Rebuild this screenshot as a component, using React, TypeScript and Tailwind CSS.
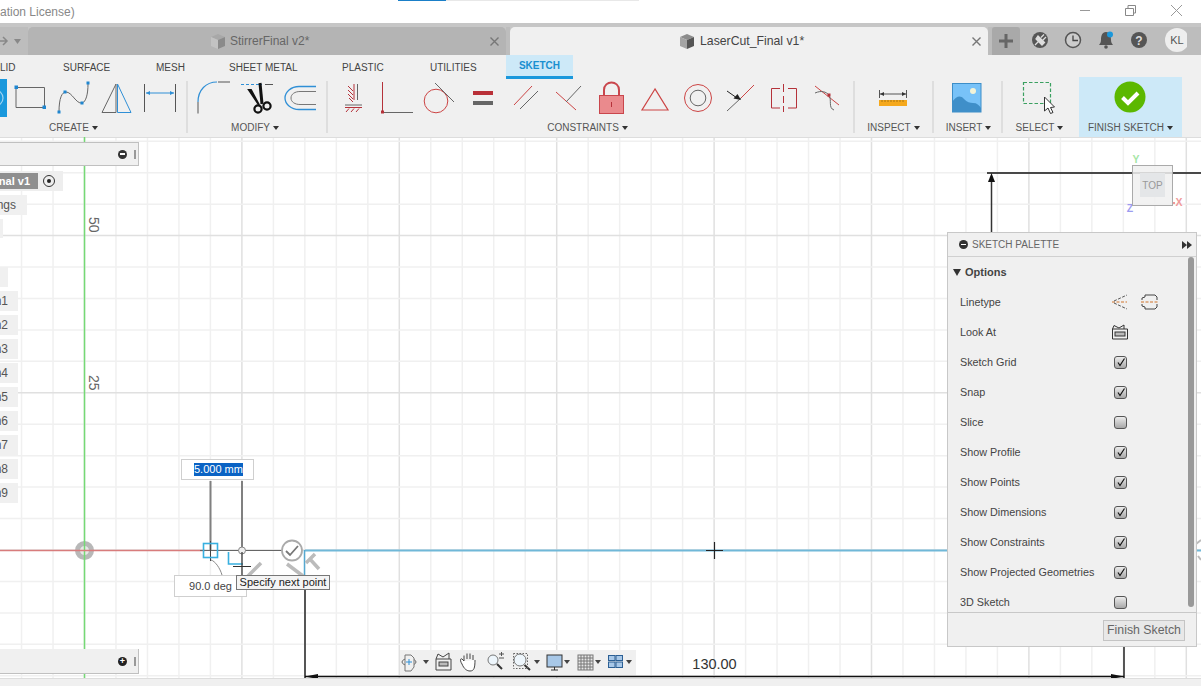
import React from "react";

const FONT = "font-['Liberation_Sans',Arial,sans-serif]";

const minorX = Array.from({length: 40}, (_, i) => 84.5 + (i - 3) * 31.48);
const minorY = Array.from({length: 19}, (_, i) => 550 - (i - 4) * 31.44);

type ToolProps = {x: number; w: number; width: string; label: string; labelClass?: string; children: React.ReactNode; sep?: boolean};

function Tool({x, w, width, label, labelClass = "", children, sep = true}: ToolProps) {
    return (
        <div className="flex h-full shrink-0">
            <div className={`flex flex-col items-center ${width}`}>
                <svg width={w} height={43} viewBox={`${x} 79 ${w} 43`} fill="none">
                    {children}
                </svg>
                <div className={`flex items-center gap-[3px] text-[10px] leading-[12px] text-[#555] ${labelClass}`}>
                    {label}
                    <span className="inline-block border-x-[3px] border-t-[4px] border-x-transparent border-t-[#333]" />
                </div>
            </div>
            {sep && <div className="mt-[2px] h-[52px] w-[2px] bg-[#dedede]" />}
        </div>
    );
}

function CreateIcons() {
    return (
        <>
            <rect x="-10" y="79" width="17" height="38" fill="#1a98dc" />
            <circle cx="-5" cy="98" r="8" stroke="#9fd4f2" strokeWidth="1.2" />
            <path d="M16 87.500H44.500V107.500H16Z" stroke="#666" strokeWidth="1" />
            <rect x="14.500" y="85.500" width="3.500" height="3.500" fill="#1f86d0" />
            <rect x="42.500" y="105.500" width="3.500" height="3.500" fill="#1f86d0" />
            <path d="M59 112C59 98 62 92 66 92C72 92 76 104 82 103C86 102 88 94 88 84" stroke="#666" strokeWidth="1" />
            <rect x="57.500" y="110.500" width="3" height="3" fill="#1f86d0" />
            <rect x="63.500" y="90.500" width="3" height="3" fill="#1f86d0" />
            <rect x="80.500" y="101.500" width="3" height="3" fill="#1f86d0" />
            <rect x="86.500" y="81.500" width="3" height="3" fill="#1f86d0" />
            <path d="M116 84V112.500H102Z" stroke="#666" strokeWidth="1" />
            <path d="M117.500 84L131 112.500H117.500Z" stroke="#2f8fd6" strokeWidth="1" />
            <path d="M144.500 84V112M175.500 84V112" stroke="#555" strokeWidth="1" />
            <path d="M146 93H174" stroke="#2f8fd6" strokeWidth="1" />
            <path d="M146 93L150 91V95ZM174 93L170 91V95Z" fill="#2f8fd6" />
        </>
    );
}

function ModifyIcons() {
    return (
        <>
            <path d="M198 102V113.500" stroke="#555" strokeWidth="1" />
            <path d="M198 102C198 90 206 82 217 82" stroke="#2f8fd6" strokeWidth="1.200" />
            <path d="M218 82H230" stroke="#555" strokeWidth="1" />
            <path d="M241 84.500H262" stroke="#2f8fd6" strokeWidth="1" strokeDasharray="3 2" />
            <path d="M265 84.500H273" stroke="#555" strokeWidth="1" />
            <path d="M249 90L259 105L251 90Z" fill="#111" stroke="#111" strokeWidth="2" />
            <path d="M260 83L262 104" stroke="#111" strokeWidth="3" />
            <circle cx="258" cy="109" r="3.600" stroke="#111" strokeWidth="2.200" />
            <circle cx="267" cy="106" r="3.600" stroke="#111" strokeWidth="2.200" />
            <path d="M316 86.500H299C291 86.500 285 92 285 98C285 104 291 109.500 299 109.500H316" stroke="#2f8fd6" strokeWidth="1.300" />
            <path d="M316 91.500H300C295 91.500 291 94 291 98C291 102 295 104.500 300 104.500H316" stroke="#777" strokeWidth="1" />
        </>
    );
}

function ConstraintIcons() {
    return (
        <>
            <path d="M354 84V100M348 86L353 91M348 90L353 95M348 94L353 99M349 98L353 102" stroke="#b5323a" strokeWidth="1" />
            <path d="M357.500 84V100" stroke="#666" strokeWidth="1" />
            <path d="M345 105H362" stroke="#666" strokeWidth="1" />
            <path d="M345 107.500H362" stroke="#b5323a" strokeWidth="1" />
            <path d="M346 112L349 108.500M351 112L354 108.500M356 112L359 108.500" stroke="#b5323a" strokeWidth="1" />
            <path d="M382.500 82V112" stroke="#b5323a" strokeWidth="1" />
            <path d="M383 112.500H413" stroke="#666" strokeWidth="1" />
            <rect x="381" y="110.500" width="3" height="3" fill="#b5323a" />
            <circle cx="436" cy="101" r="11.800" stroke="#c44" strokeWidth="1" />
            <path d="M435 83L454 102" stroke="#666" strokeWidth="1" />
            <rect x="473" y="91" width="20" height="4" fill="#b93038" />
            <rect x="473" y="101" width="20" height="4" fill="#666" />
            <path d="M514 105L532 86" stroke="#c44" strokeWidth="1" />
            <path d="M520 109L538 91" stroke="#666" strokeWidth="1" />
            <path d="M556 92L576 110" stroke="#c44" strokeWidth="1" />
            <path d="M566 102L581 86" stroke="#666" strokeWidth="1" />
            <path d="M604 95V90C604 80 619 80 619 90V95" stroke="#c9464c" strokeWidth="2" />
            <rect x="599.500" y="95.500" width="24" height="18" fill="#ea8a8d" stroke="#c9464c" />
            <path d="M611.500 102V107" stroke="#b5323a" strokeWidth="1" />
            <path d="M655 89L642 110H668Z" stroke="#c44" strokeWidth="1.200" />
            <circle cx="698" cy="98" r="13.500" stroke="#c44" strokeWidth="1" />
            <circle cx="698" cy="98" r="7.800" stroke="#666" strokeWidth="1" />
            <path d="M727 111L741 98" stroke="#666" strokeWidth="1" />
            <path d="M741 98L754 85" stroke="#c44" strokeWidth="1" />
            <path d="M727 91L737 98" stroke="#222" strokeWidth="1" />
            <path d="M741 100L733.500 98.500L737.500 94Z" fill="#222" />
            <path d="M780 88.500H771.500V108H780M788 88.500H796.500V108H788" stroke="#b5323a" strokeWidth="1" />
            <path d="M783.500 84V92M783.500 96V103M783.500 106V112" stroke="#b5323a" strokeWidth="1" />
            <path d="M815 86L839 105" stroke="#c44" strokeWidth="1" />
            <path d="M815 93C822 90 826 92 829 95C832 100 828 108 834 110" stroke="#666" strokeWidth="1" />
            <rect x="827.500" y="93.500" width="3" height="3" fill="#b5323a" />
        </>
    );
}

function BottomNav() {
    const caret = (x: number) => <path key={x} d={`M${x - 3} 660H${x + 3}L${x} 664Z`} fill="#444" />;
    return (
        <svg width="236" height="25" viewBox="400 650 236 25" fill="none">
            <ellipse cx="409" cy="662" rx="7" ry="3.500" stroke="#666" />
            <path d="M405 655H411L414 658V667L411 671H405Z" stroke="#777" fill="#f0f0f0" />
            <path d="M406 662H412M409 659V665" stroke="#2f8fd6" />
            {[426, 537, 567, 598, 629].map(caret)}
            <path d="M436 659H451V670H436ZM436 659L438 654L443 657L449 653V659" stroke="#444" />
            <rect x="439" y="662" width="9" height="4" stroke="#444" fill="#bbb" />
            <path d="M464 661V655.500M467 659V653.500M470 659V653.500M473 660V655M464 661L462 659C460 658 460 661 462 664C464 669 467 671 470 671C474 671 475 668 475 660" stroke="#444" fill="#fff" />
            <circle cx="493" cy="660" r="5" stroke="#777" fill="#eef6fc" />
            <path d="M497 664L502 669" stroke="#333" strokeWidth="2" />
            <path d="M499 654H504M501.500 652V656M499 658H504" stroke="#555" />
            <circle cx="520" cy="660" r="6" stroke="#777" fill="#eef6fc" />
            <path d="M524.500 665L530 670" stroke="#333" strokeWidth="2" />
            <rect x="513.500" y="653.500" width="14" height="15" stroke="#666" strokeDasharray="1.500 1.500" />
            <rect x="547" y="655" width="15" height="12" fill="#a8c8e8" stroke="#333" />
            <path d="M551 670H558M554.500 667V670" stroke="#333" />
            <g stroke="#777">
                <rect x="578" y="655" width="15" height="15" fill="#e8e8e8" />
                <path d="M581 655V670M584 655V670M587 655V670M590 655V670M578 658H593M578 661H593M578 664H593M578 667H593" />
            </g>
            <rect x="608.500" y="655.500" width="6.500" height="5" fill="#a8c8e8" stroke="#2b5f94" />
            <rect x="616" y="655.500" width="6.500" height="5" fill="#a8c8e8" stroke="#2b5f94" />
            <rect x="608.500" y="662" width="6.500" height="5.500" fill="#a8c8e8" stroke="#2b5f94" />
            <rect x="616" y="662" width="6.500" height="5.500" fill="#a8c8e8" stroke="#2b5f94" />
        </svg>
    );
}

function CanvasDrawing() {
    return (
        <svg className="absolute inset-0" width="1201" height="549" viewBox="0 137 1201 549" fill="none">
            {minorX.map((x, i) => (
                <line key={x} x1={x} x2={x} y1="137" y2="686" stroke={(i - 3) % 5 === 0 ? "#e0e0e0" : "#f0f0f0"} strokeWidth="1.500" />
            ))}
            {minorY.map((y, i) => (
                <line key={y} y1={y} y2={y} x1="0" x2="1201" stroke={(i - 4) % 5 === 0 ? "#e0e0e0" : "#f0f0f0"} strokeWidth="1.500" />
            ))}
            <path d="M0 137.500H1201" stroke="#dddddd" />

            <circle cx="84.500" cy="550.500" r="7" fill="#e8e8e8" stroke="#b8b8b8" strokeWidth="5" />
            <path d="M84.500 137V686" stroke="#75d975" strokeWidth="1.500" />
            <path d="M0 550.500H205" stroke="#d87c7c" strokeWidth="1.500" />
            <text transform="translate(88.500 217) rotate(90)" fontSize="14" fill="#666" fontFamily="Liberation Sans">50</text>
            <text transform="translate(88.500 375) rotate(90)" fontSize="14" fill="#666" fontFamily="Liberation Sans">25</text>

            <path d="M987 173H1201" stroke="#111" strokeWidth="1.500" />
            <path d="M991.500 181V235" stroke="#333" strokeWidth="1.500" />
            <path d="M991.500 173L988 182H995Z" fill="#111" />

            <path d="M305 550.500H1201" stroke="#70b8d8" strokeWidth="2" />
            <path d="M304.500 550V577" stroke="#55a8d0" strokeWidth="1.500" />
            <path d="M305 590V678M1124 640V678" stroke="#222" strokeWidth="1.500" />
            <path d="M305 676.500H1124" stroke="#111" strokeWidth="1.500" />
            <path d="M305 676.500L318 674V679ZM1124 676.500L1111 674V679Z" fill="#111" />
            <path d="M706 550.500H723M714.500 542V559" stroke="#222" strokeWidth="1.200" />
            <text x="714.500" y="669" textAnchor="middle" fontSize="14.500" fill="#333" fontFamily="Liberation Sans">130.00</text>

            <path d="M210.500 481V550M242 481V547" stroke="#808080" strokeWidth="2" />
            <path d="M200 550.500H282" stroke="#666" strokeWidth="1.200" />
            <path d="M210.500 541V561" stroke="#444" />
            <rect x="203.500" y="543.500" width="14" height="14" stroke="#38b0e0" strokeWidth="1.600" />
            <path d="M228.500 552V564H243" stroke="#38b0e0" strokeWidth="1.600" />
            <circle cx="242" cy="550.500" r="3.500" fill="#eee" stroke="#888" />
            <path d="M233 566.500H251M242 552V576" stroke="#333" strokeWidth="1.200" />
            <path d="M211 560C215 561 220 568 222 575" stroke="#888" />
            <path d="M247 577L261 563" stroke="#bbb" strokeWidth="3.500" />
            <circle cx="292" cy="550.500" r="10" stroke="#aaa" strokeWidth="1.800" fill="#fff" />
            <path d="M286 551L290 555L298 546" stroke="#777" strokeWidth="1.800" />
            <path d="M287 564L303 576" stroke="#bbb" strokeWidth="3.500" />
            <path d="M309 558L319 569M306 563L315 554" stroke="#bbb" strokeWidth="3.500" />

            <g fontFamily="Liberation Sans" fontSize="10.500" fontWeight="bold">
                <text x="1136" y="163" fill="#a6e6a6" textAnchor="middle">Y</text>
                <text x="1179" y="206" fill="#f09a9a" textAnchor="middle">X</text>
                <text x="1130" y="212" fill="#9c9cf0" textAnchor="middle">Z</text>
            </g>
            <rect x="1132.500" y="165.500" width="40" height="40" fill="#f0f0f0" fillOpacity="0.85" stroke="#aaa" />
            <rect x="1140" y="173" width="25" height="24" fill="#e4e6e8" />
            <rect x="1173" y="202" width="2" height="2" fill="#f09a9a" />
            <text x="1152.500" y="189" textAnchor="middle" fontSize="10" fill="#999" fontFamily="Liberation Sans">TOP</text>
            <path d="M1196 544L1201 540M1198 556L1201 560" stroke="#bbb" strokeWidth="2" />
        </svg>
    );
}

function Check() {
    return (
        <svg width="10" height="10" viewBox="0 0 10 10" fill="none">
            <path d="M2 5.500L4 8.500L8.500 1.500" stroke="#111" strokeWidth="1.200" />
        </svg>
    );
}

function Row({label, on, children}: {label: string; on?: boolean; children?: React.ReactNode}) {
    return (
        <div className="flex h-[30px] shrink-0 items-center pl-[12px] text-[10.800px] text-[#444]">
            <span className="w-[152px]">{label}</span>
            {children ?? (
                <span className="ml-[2px] flex h-[13px] w-[13px] items-center justify-center rounded-[3px] border border-[#555] bg-linear-to-b from-[#ececec] to-[#a8a8a8]">
                    {on && <Check />}
                </span>
            )}
        </div>
    );
}

function SketchPalette() {
    return (
        <div className="absolute left-[947px] top-[95px] flex h-[415px] w-[250px] flex-col border border-[#c8c8c8] bg-[#f0f0f0]">
            <div className="flex h-[24px] shrink-0 items-center border-b border-[#d0d0d0] pl-[11px] pr-[4px] text-[10px] text-[#666]">
                <span className="mr-[4px] flex h-[9px] w-[9px] items-center justify-center rounded-full bg-[#333]">
                    <span className="h-[1.500px] w-[5px] bg-white" />
                </span>
                SKETCH PALETTE
                <svg className="ml-auto" width="10" height="8" viewBox="0 0 10 8"><path d="M0 0L5 4L0 8ZM5 0L10 4L5 8Z" fill="#333" /></svg>
            </div>
            <div className="relative h-[355px] shrink-0 overflow-hidden">
                <div className="flex h-[30px] items-center pl-[5px] text-[11px] font-bold text-[#444]">
                    <span className="mr-[4px] inline-block border-x-[4px] border-t-[7px] border-x-transparent border-t-[#333]" />
                    Options
                </div>
                <Row label="Linetype">
                    <svg width="46" height="16" viewBox="0 0 46 16" fill="none">
                        <path d="M0 8H15" stroke="#d0752c" strokeDasharray="3 1.500" />
                        <path d="M2 7L15 1M2 9L15 15" stroke="#555" strokeDasharray="3 1.500" />
                        <path d="M33 1H43L45 3V6M33 1V3L30 4V6M33 15H43L45 13V10M33 15V13L30 12V10" stroke="#444" />
                        <path d="M29 8H46" stroke="#d0752c" strokeDasharray="3 1.500" />
                    </svg>
                </Row>
                <Row label="Look At">
                    <svg width="16" height="16" viewBox="0 0 16 16" fill="none">
                        <path d="M.5 5H15.500V15H.5ZM.5 5L2 1.500L7 4L12 1V5" stroke="#333" />
                        <rect x="3" y="8" width="10" height="4" fill="#bbb" stroke="#333" />
                    </svg>
                </Row>
                <Row label="Sketch Grid" on />
                <Row label="Snap" on />
                <Row label="Slice" />
                <Row label="Show Profile" on />
                <Row label="Show Points" on />
                <Row label="Show Dimensions" on />
                <Row label="Show Constraints" on />
                <Row label="Show Projected Geometries" on />
                <Row label="3D Sketch" />
                <div className="absolute right-[2px] top-0 h-[350px] w-[6px] rounded-[3px] bg-[#999]" />
            </div>
            <div className="flex flex-1 items-start justify-end border-t border-[#c8c8c8] pr-[11px] pt-[7px]">
                <div className="flex h-[21px] w-[82px] items-center justify-center border border-[#c4c4c4] bg-[#e8e8e8] text-[12.300px] text-[#666]">
                    Finish Sketch
                </div>
            </div>
        </div>
    );
}

function SideItem({text, className}: {text?: string; className: string}) {
    return (
        <div className={`flex items-center justify-end overflow-hidden whitespace-nowrap bg-[#f0f0f0] text-[12px] text-[#555] ${className}`}>
            {text}
        </div>
    );
}

function Browser() {
    return (
        <div className="absolute left-0 top-[5px] flex flex-col items-start">
            <div className="flex h-[24px] w-[139px] items-center justify-end border border-l-0 border-[#c0c0c0] bg-[#f0f0f0] pr-[2px]">
                <span className="mr-[7px] flex h-[9px] w-[9px] items-center justify-center rounded-full bg-[#333]">
                    <span className="h-[1.500px] w-[5px] bg-white" />
                </span>
                <span className="h-[9px] w-[2px] border-x border-[#999]" />
            </div>
            <div className="mt-[5px] flex h-[20px] w-[63px] items-center bg-[#eeeeee]">
                <span className="flex h-[16px] w-[38px] items-center justify-end overflow-hidden whitespace-nowrap bg-[#8f8f8f] pr-[8px] text-[11px] font-bold text-white">nal v1</span>
                <span className="ml-[5px] flex h-[12px] w-[12px] items-center justify-center rounded-full border border-[#333]">
                    <span className="h-[4px] w-[4px] rounded-full bg-[#222]" />
                </span>
            </div>
            <SideItem text="ngs" className="mt-[4px] h-[20px] w-[27px] pr-[11px]" />
            <SideItem className="mt-[4px] h-[19px] w-[3px]" />
            <SideItem className="mt-[29px] h-[20px] w-[8px]" />
            {[1, 2, 3, 4, 5, 6, 7, 8, 9].map(n => (
                <SideItem key={n} text={`n${n}`} className="mt-[4px] h-[20px] w-[18px] pr-[10px]" />
            ))}
        </div>
    );
}

function TabCube({dark}: {dark?: boolean}) {
    return (
        <svg width="16" height="15" viewBox="0 0 16 15">
            <path d="M1 3L8 0L15 3L8 6Z" fill={dark ? "#8c8c8c" : "#a8a8a8"} />
            <path d="M1 3L8 6V15L1 12Z" fill={dark ? "#a4a4a4" : "#c2c2c2"} />
            <path d="M8 6L15 3V12L8 15Z" fill={dark ? "#555" : "#8a8a8a"} />
        </svg>
    );
}

function CloseX() {
    return (
        <svg className="ml-auto" width="9" height="9" viewBox="0 0 9 9" fill="none">
            <path d="M.5 .5L8.500 8.500M8.500 .5L.5 8.500" stroke="#777" strokeWidth="1.400" />
        </svg>
    );
}

function WindowBar() {
    return (
        <div className="relative flex h-[23px] shrink-0 items-center bg-white pt-[1px] text-[12px] text-[#888]">
            <div className="absolute left-[398px] top-0 h-[1px] w-[48px] bg-[#1a7fc8]" />
            <div className="absolute left-[446px] top-0 h-[1px] w-[193px] bg-[#e8e8e8]" />
            ation License)
            <svg className="absolute left-[1078px] top-[3px]" width="110" height="16" viewBox="1078 3 110 16" fill="none">
                <path d="M1080 10.500H1090" stroke="#999" />
                <path d="M1125.500 8.500H1133.500V15.500H1125.500ZM1128 8V5.500H1135.500V13H1134" stroke="#888" />
                <path d="M1171 5L1182 16M1182 5L1171 16" stroke="#999" />
            </svg>
        </div>
    );
}

function TabStrip() {
    return (
        <div className="flex h-[32px] shrink-0 items-end bg-[#c6c6c6]">
            <div className="flex h-[28px] w-[28px] items-center bg-[#bdbdbd] text-[#888]">
                <svg width="22" height="12" viewBox="0 0 22 12" fill="none">
                    <path d="M0 6H6M3 2L7 6L3 10" stroke="#888" strokeWidth="1.500" />
                    <path d="M14 4H21L17.500 9Z" fill="#888" />
                </svg>
            </div>
            <div className="flex h-[28px] w-[478px] items-center rounded-t-[5px] bg-[#b4b4b4] pl-[182px] pr-[7px] text-[12px] text-[#666]">
                <TabCube />
                <span className="ml-[4px]">StirrerFinal v2*</span>
                <CloseX />
            </div>
            <div className="flex h-[28px] w-[4px] bg-[#bdbdbd]" />
            <div className="flex h-[28px] w-[478px] items-center rounded-t-[5px] bg-[#f0f0f0] pl-[169px] pr-[7px] text-[12.250px] text-[#444]">
                <TabCube dark />
                <span className="ml-[5px]">LaserCut_Final v1*</span>
                <CloseX />
            </div>
            <div className="flex h-[28px] flex-1 items-center bg-[#bdbdbd] pl-[4px]">
                <div className="flex h-[28px] w-[28px] items-center justify-center rounded-t-[3px] bg-[#a9a9a9]">
                    <svg width="14" height="14" viewBox="0 0 14 14"><path d="M5.500 0H8.500V5.500H14V8.500H8.500V14H5.500V8.500H0V5.500H5.500Z" fill="#666" /></svg>
                </div>
                <svg className="ml-[9px]" width="158" height="28" viewBox="1029 27 158 28" fill="none">
                    <circle cx="1040" cy="40" r="8" fill="#555" />
                    <path d="M1035 45L1038.500 41.500M1038 36L1044.500 42.500L1042 45L1036 39ZM1041 37.500L1044 34.500M1043 40L1046 37" stroke="#ddd" strokeWidth="1.300" fill="#ddd" />
                    <circle cx="1073" cy="40" r="7.500" fill="#ccc" stroke="#555" strokeWidth="1.500" />
                    <path d="M1073 35.500V40.500H1078" stroke="#444" strokeWidth="1.300" />
                    <path d="M1106 32C1102 32 1101 36 1101 40C1101 43 1099.500 44 1099 45H1113C1112.500 44 1111 43 1111 40C1111 36 1110 32 1106 32Z" fill="#555" />
                    <circle cx="1106" cy="47" r="1.800" fill="#555" />
                    <circle cx="1110" cy="34.500" r="3" fill="#1a98dc" />
                    <circle cx="1139" cy="40" r="8" fill="#555" />
                    <text x="1139" y="44.500" textAnchor="middle" fontSize="12" fontWeight="bold" fill="#ddd" fontFamily="Liberation Sans">?</text>
                    <circle cx="1177" cy="40" r="12" fill="#eeeeee" />
                    <text x="1177" y="44" textAnchor="middle" fontSize="11" fill="#555" fontFamily="Liberation Sans">KL</text>
                </svg>
            </div>
        </div>
    );
}

function Ribbon() {
    return (
        <div className="shrink-0 bg-[#f0f0f0]">
            <div className="flex h-[24px] items-center text-[10px] text-[#444]">
                <span className="w-[63px]">LID</span>
                <span className="w-[93px]">SURFACE</span>
                <span className="w-[73px]">MESH</span>
                <span className="w-[113px]">SHEET METAL</span>
                <span className="w-[88px]">PLASTIC</span>
                <span className="w-[76px]">UTILITIES</span>
                <span className="flex h-[24px] w-[67px] items-center justify-center border-b-[3px] border-[#1a98dc] bg-[#cde9f8] font-semibold text-[#1a8fd0]">SKETCH</span>
            </div>
            <div className="flex h-[58px]">
                <div className="-ml-[39px] flex">
                    <Tool x={-39} w={225} width="w-[225px]" label="CREATE"><CreateIcons /></Tool>
                </div>
                <Tool x={188} w={138} width="w-[138px]" labelClass="pr-[4px]" label="MODIFY"><ModifyIcons /></Tool>
                <Tool x={328} w={525} width="w-[525px]" labelClass="pr-[6px]" label="CONSTRAINTS"><ConstraintIcons /></Tool>
                <Tool x={855} w={77} width="w-[77px]" label="INSPECT">
                    <path d="M879.500 90V98M906.500 90V98" stroke="#555" />
                    <path d="M880 94H906" stroke="#555" />
                    <path d="M880 94L884 92V96ZM906 94L902 92V96Z" fill="#333" />
                    <rect x="879" y="100" width="28" height="6" fill="#f5a81c" />
                    <path d="M882 100V102M885 100V102M888 100V102M891 100V102M894 100V102M897 100V102M900 100V102M903 100V102" stroke="#a87410" />
                </Tool>
                <Tool x={934} w={67} width="w-[67px]" labelClass="pl-[2px]" label="INSERT">
                    <rect x="952.500" y="83.500" width="28.500" height="28.500" fill="#78c2f8" stroke="#3d8ec8" />
                    <circle cx="973" cy="91" r="3" fill="#f3f3d8" />
                    <path d="M952 112V102C957 96 960 95 964 99C967 102 970 103 973 103C977 103 979 105 981 108V112Z" fill="#3f8fc9" />
                </Tool>
                <Tool x={1003} w={75} width="w-[75px]" sep={false} labelClass="pr-[2px]" label="SELECT">
                    <rect x="1023.500" y="82.500" width="27" height="21" stroke="#3aa060" strokeWidth="1.200" strokeDasharray="3.500 2" />
                    <path d="M1044.500 97V111L1048 108L1050.500 113.500L1053 112.500L1050.500 107.500L1054.500 107Z" fill="#fff" stroke="#333" />
                </Tool>
                <div className="ml-[1px] -mt-[2px] flex h-[60px] w-[103px] flex-col items-center bg-[#cde9f8]">
                    <svg className="mt-[4px] -ml-[2px]" width="32" height="39" viewBox="0 0 32 39">
                        <circle cx="16" cy="16" r="15.500" fill="#5cb800" />
                        <path d="M8.500 16.500L14 22L24 12" fill="none" stroke="#fff" strokeWidth="4" />
                    </svg>
                    <div className="mt-[2px] flex items-center gap-[3px] text-[10px] leading-[12px] text-[#555]">
                        FINISH SKETCH
                        <span className="inline-block border-x-[3px] border-t-[4px] border-x-transparent border-t-[#333]" />
                    </div>
                </div>
            </div>
        </div>
    );
}

export default function App() {
    return (
        <div className={`relative flex h-[686px] w-[1201px] flex-col overflow-hidden bg-white ${FONT}`}>
            <WindowBar />
            <TabStrip />
            <Ribbon />
            <div className="relative flex-1">
                <CanvasDrawing />
                <Browser />
                <div className="absolute bottom-[12px] left-0 flex h-[25px] w-[139px] items-center justify-end border-b border-r border-[#c0c0c0] bg-[#f0f0f0] pr-[2px]">
                    <span className="mr-[7px] flex h-[9px] w-[9px] items-center justify-center rounded-full bg-[#222] text-[9px] leading-none font-bold text-white">+</span>
                    <span className="h-[9px] w-[2px] border-x border-[#999]" />
                </div>

                <div className="absolute left-[181px] top-[322px] flex h-[21px] w-[73px] items-center border border-[#cfcfcf] bg-white pl-[12px] text-[11px] leading-[13px]">
                    <span className="bg-[#0a63c4] text-white">5.000 mm</span>
                </div>
                <div className="absolute left-[174px] top-[438px] flex h-[22px] w-[73px] items-center justify-center border border-[#cfcfcf] bg-white text-[11px] text-[#444]">
                    90.0 deg
                </div>
                <div className="absolute left-[236px] top-[438px] flex h-[15px] w-[94px] items-center justify-center border border-[#777] bg-[#f4f4f4] text-[11px] text-[#222]">
                    Specify next point
                </div>

                <SketchPalette />

                <div className="absolute left-[400px] top-[513px] flex h-[25px] w-[236px] bg-[#f0f0f0]">
                    <BottomNav />
                </div>
                <div className="absolute inset-x-0 bottom-0 h-[8px] border-t border-[#dddddd] bg-[#f0f0f0]" />
            </div>
        </div>
    );
}
